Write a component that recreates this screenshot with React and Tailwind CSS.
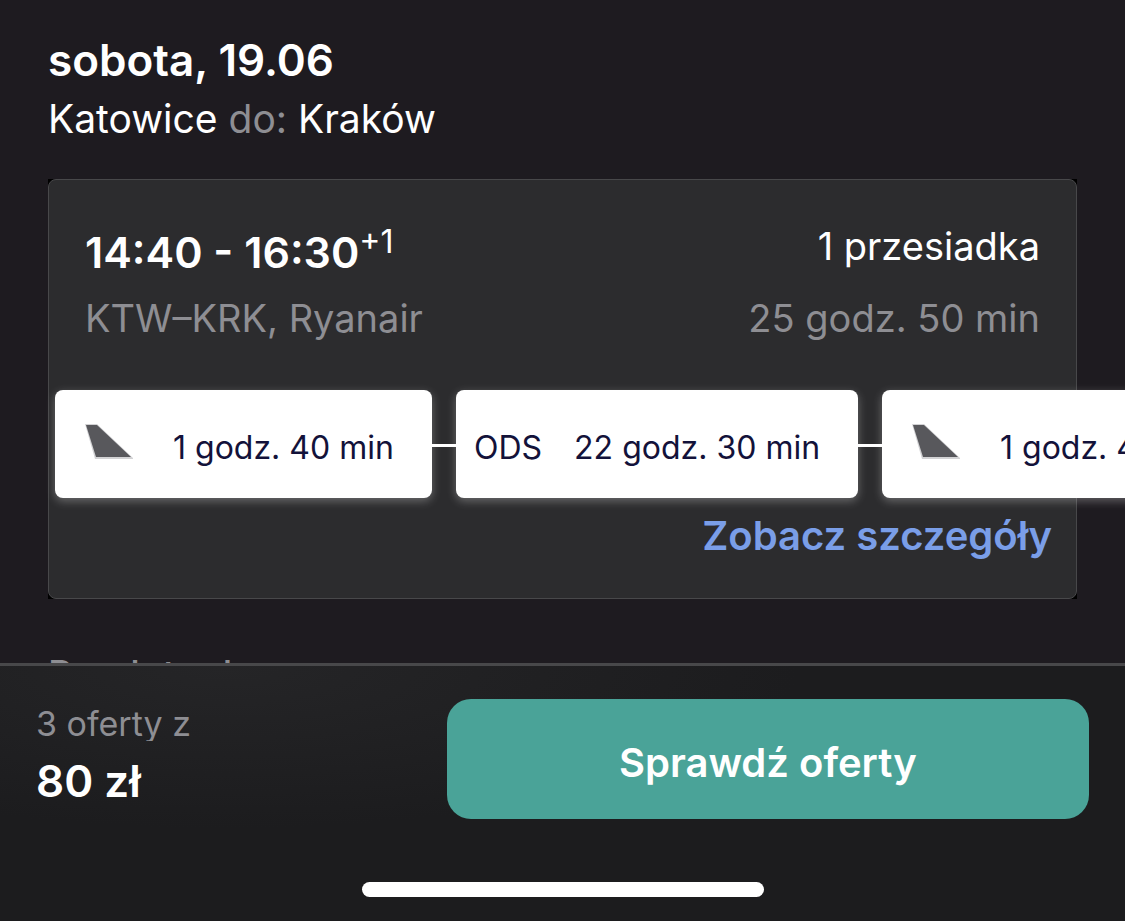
const segments = [
  { type: "flight", duration: "1 godz. 40 min" },
  { type: "stop", airport: "ODS", duration: "22 godz. 30 min" },
  { type: "flight", duration: "1 godz. 40 min" },
];

function TailIcon() {
  return (
    <svg viewBox="0 0 48 36" className="w-12 h-9 shrink-0" aria-hidden="true">
      <path d="M0 0h12l37 35H10z" fill="#d2d2d4" />
      <path d="M1 1h11l34 32H11z" fill="#58585c" />
    </svg>
  );
}

function Segment({ segment }) {
  const isFlight = segment.type === "flight";

  return (
    <li className="group flex items-center shrink-0">
      <div
        className={`flex items-center h-[108px] rounded-lg bg-white text-[#13123a] text-[32px] leading-10 whitespace-nowrap shadow-[0_3px_10px_rgba(255,255,255,0.3)] ${
          isFlight ? "w-[377px] pl-[30px] gap-10" : "w-[402px] pl-[18px] gap-8"
        }`}
      >
        {isFlight ? (
          <span className="pb-1">
            <TailIcon />
          </span>
        ) : (
          <span className="pt-2">{segment.airport}</span>
        )}
        <span className="pt-2">{segment.duration}</span>
      </div>
      <span className="w-6 h-[3px] mt-0.5 bg-white group-last:hidden" />
    </li>
  );
}

function ItineraryCard() {
  return (
    <div className="mt-9 bg-black">
      <article className="rounded-lg border border-[#48484a] bg-[#2c2c2e] h-[420px]">
        <div className="flex justify-between px-9 pt-9">
          <div>
            <p className="flex items-start text-[43px] leading-[72px] font-semibold whitespace-pre">
              14:40 - 16:30
              <sup className="top-0 text-[32px] leading-[52px] font-normal">+1</sup>
            </p>
            <p className="text-[38px] leading-[60px] text-[#8e8e93]">KTW–KRK, Ryanair</p>
          </div>
          <div className="text-right">
            <p className="text-[38px] leading-[60px]">1 przesiadka</p>
            <p className="pt-3 text-[38px] leading-[60px] text-[#8e8e93]">
              25 godz. 50 min
            </p>
          </div>
        </div>

        <ul className="mt-[42px] ml-1.5 flex">
          {segments.map((segment, i) => (
            <Segment key={i} segment={segment} />
          ))}
        </ul>

        <div className="flex justify-end pt-2.5 pr-6">
          <a href="#szczegoly" className="text-[40px] leading-[56px] font-semibold text-[#7a9ee8]">
            Zobacz szczegóły
          </a>
        </div>
      </article>
    </div>
  );
}

function OfferBar() {
  return (
    <footer className="shrink-0 border-t-[3px] border-[#48484a] bg-[#1c1c1e] bg-[radial-gradient(ellipse_at_20%_0%,#252527_0%,#1c1c1e_45%)]">
      <div className="flex items-start justify-between px-9 pt-[33px]">
        <div className="pt-1">
          <p className="h-[38px] overflow-hidden text-[34px] leading-[42px] text-[#8e8e93]">
            3 oferty z
          </p>
          <p className="mt-3 text-[44px] leading-[56px] font-semibold">80 zł</p>
        </div>
        <button
          type="button"
          className="w-[61%] h-[120px] pt-2 rounded-3xl bg-[#4aa398] text-[40px] font-semibold cursor-pointer"
        >
          Sprawdź oferty
        </button>
      </div>
      <div className="mx-auto mt-[63px] mb-6 w-[402px] h-[15px] rounded-full bg-white" />
    </footer>
  );
}

export default function App() {
  return (
    <div className="flex flex-col h-screen bg-[#1e1b20] text-white font-['Inter','Liberation_Sans',sans-serif]">
      <main className="flex-1 min-h-0 overflow-hidden px-12 pt-8">
        <h1 className="text-[44px] leading-[56px] font-semibold">sobota, 19.06</h1>
        <p className="pt-1.5 text-[39px] leading-[49px]">
          Katowice <span className="text-[#8e8e93]">do:</span> Kraków
        </p>
        <ItineraryCard />
        <p className="mt-[51px] text-[38px] leading-[49px] font-medium text-[#8e8e93]">
          Przylot nd.
        </p>
      </main>
      <OfferBar />
    </div>
  );
}
